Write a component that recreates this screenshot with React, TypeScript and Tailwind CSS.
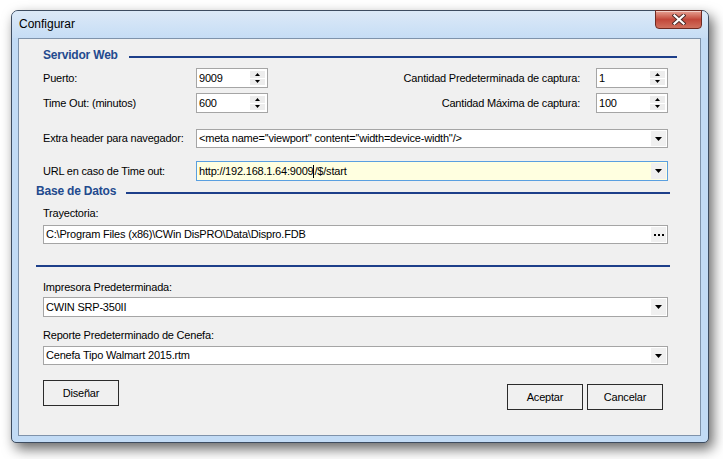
import type { ReactNode } from 'react'

const FONT = { fontFamily: '"Liberation Sans", Arial, sans-serif' }

function Tri({ up = false, w = 7, h = 4 }: { up?: boolean; w?: number; h?: number }) {
  return (
    <svg width={w} height={h} viewBox={`0 0 ${w} ${h}`} className="block">
      <path d={up ? `M${w / 2} 0 L${w} ${h} L0 ${h}Z` : `M0 0 L${w} 0 L${w / 2} ${h}Z`} fill="#000" />
    </svg>
  )
}

function SpinBox({ value }: { value: string }) {
  return (
    <div className="flex h-[20px] w-[72px] border border-[#a5a5a5] bg-white">
      <span className="flex-1 pl-[2px] leading-[18px]">{value}</span>
      <div className="my-[2px] mr-[2px] flex w-[15px] flex-col gap-[1px]">
        <div className="flex flex-1 items-center justify-center bg-[#ededed]">
          <Tri up w={5} h={3} />
        </div>
        <div className="flex flex-1 items-center justify-center bg-[#ededed]">
          <Tri w={5} h={3} />
        </div>
      </div>
    </div>
  )
}

function Combo({
  children,
  focused = false,
  button,
  height = 'h-[20px]',
}: {
  children: ReactNode
  focused?: boolean
  button?: ReactNode
  height?: string
}) {
  return (
    <div
      className={`flex ${height} border ${
        focused ? 'border-[#5a9fe0] bg-[#ffffe0]' : 'border-[#a5a5a5] bg-white'
      }`}
    >
      <span className="flex flex-1 items-center truncate pl-[2px]">{children}</span>
      <div className="m-[1px] flex w-[15px] items-center justify-center bg-[#f0f0f0]">
        {button ?? <Tri />}
      </div>
    </div>
  )
}

function Heading({ title, pl, pr, gap }: { title: string; pl: string; pr: string; gap: string }) {
  return (
    <div className={`flex h-[14px] items-center ${pl} ${pr}`}>
      <span className="text-[12px] font-bold leading-[14px] tracking-[-0.2px] text-[#234a8e]">{title}</span>
      <div className={`${gap} mt-[3px] h-[2px] flex-1 bg-[#1d3f8a]`} />
    </div>
  )
}

function Btn({ label }: { label: string }) {
  return (
    <button
      type="button"
      className="flex h-[26px] w-[76px] items-center justify-center border border-[#2b2b2b] bg-[#f0f0f0] text-[11px]"
    >
      {label}
    </button>
  )
}

export default function App() {
  return (
    <div
      className="min-h-screen bg-white pl-[11px] pt-[10px] text-[11px] tracking-[-0.2px] text-black"
      style={FONT}
    >
      <div className="flex h-[433px] w-[698px] flex-col rounded-t-[7px] rounded-b-[5px] border border-[#3d4c60] bg-[#c2dbf5] shadow-[4px_6px_13px_rgba(0,0,0,0.6)]">
        {/* title bar */}
        <div className="relative flex h-[27px] rounded-t-[6px] bg-gradient-to-b from-[#dce9f7] to-[#c6ddf5] pl-[7px]">
          <span className="mt-[6px] text-[12px] leading-[15px] tracking-normal">Configurar</span>
          <div className="ml-auto mr-[6px] -mt-[1px] flex h-[19px] w-[47px] items-center justify-center rounded-b-[4px] border border-[#6e2a22] bg-gradient-to-b from-[#e6a193] via-[#c2473a] to-[#d0705e] shadow-[inset_0_1px_0_rgba(255,255,255,0.5)]">
            <svg width="14" height="11" viewBox="0 0 14 11">
              <path d="M2.5 1.5 L11.5 9.5 M11.5 1.5 L2.5 9.5" stroke="#4a2a28" strokeWidth="4" strokeLinecap="square" />
              <path d="M2.5 1.5 L11.5 9.5 M11.5 1.5 L2.5 9.5" stroke="#ffffff" strokeWidth="2.2" strokeLinecap="square" />
            </svg>
          </div>
        </div>

        {/* client area */}
        <div className="mb-[6px] ml-[6px] mr-[7px] flex flex-1 flex-col border border-[#7f93ab] bg-[#f0f0f0]">
          <div className="mt-[9px]">
            <Heading title="Servidor Web" pl="pl-[24px]" pr="pr-[23px]" gap="ml-[11px]" />
          </div>

          <div className="mt-[6px] flex h-[20px] items-center pl-[24px] pr-[32px]">
            <span className="w-[153px]">Puerto:</span>
            <SpinBox value="9009" />
            <span className="flex-1 pr-[16px] text-right">Cantidad Predeterminada de captura:</span>
            <SpinBox value="1" />
          </div>
          <div className="mt-[5px] flex h-[20px] items-center pl-[24px] pr-[32px]">
            <span className="w-[153px]">Time Out: (minutos)</span>
            <SpinBox value="600" />
            <span className="flex-1 pr-[16px] text-right">Cantidad Máxima de captura:</span>
            <SpinBox value="100" />
          </div>

          <div className="mt-[16px] flex items-center pl-[24px] pr-[32px]">
            <span className="w-[153px]">Extra header para navegador:</span>
            <div className="flex-1">
              <Combo height="h-[19px]">
                &lt;meta name=''viewport'' content=''width=device-width''/&gt;
              </Combo>
            </div>
          </div>
          <div className="mt-[13px] flex items-center pl-[24px] pr-[32px]">
            <span className="w-[153px]">URL en caso de Time out:</span>
            <div className="flex-1">
              <Combo focused>
                http://192.168.1.64:9009
                <span className="inline-block h-[13px] w-px bg-black" />
                /$/start
              </Combo>
            </div>
          </div>

          <div className="mt-[3px]">
            <Heading title="Base de Datos" pl="pl-[17px]" pr="pr-[30px]" gap="ml-[10px]" />
          </div>

          <div className="mt-[9px] h-[13px] pl-[24px] leading-[13px]">Trayectoria:</div>
          <div className="mt-[5px] pl-[24px] pr-[32px]">
            <Combo
              height="h-[19px]"
              button={
                <span className="flex gap-[2px]">
                  <span className="h-[2px] w-[2px] bg-black" />
                  <span className="h-[2px] w-[2px] bg-black" />
                  <span className="h-[2px] w-[2px] bg-black" />
                </span>
              }
            >
              C:\Program Files (x86)\CWin DisPRO\Data\Dispro.FDB
            </Combo>
          </div>

          <div className="ml-[17px] mr-[30px] mt-[21px] h-[2px] bg-[#1d3f8a]" />

          <div className="mt-[14px] h-[13px] pl-[24px] leading-[13px]">Impresora Predeterminada:</div>
          <div className="mt-[3px] pl-[24px] pr-[32px]">
            <Combo>CWIN SRP-350II</Combo>
          </div>

          <div className="mt-[12px] h-[13px] pl-[24px] leading-[13px]">Reporte Predeterminado de Cenefa:</div>
          <div className="mt-[4px] pl-[24px] pr-[32px]">
            <Combo height="h-[19px]">Cenefa Tipo Walmart 2015.rtm</Combo>
          </div>

          <div className="mt-[15px] flex items-start pl-[24px] pr-[37px]">
            <Btn label="Diseñar" />
            <div className="ml-auto mt-[4px] flex gap-[4px]">
              <Btn label="Aceptar" />
              <Btn label="Cancelar" />
            </div>
          </div>
        </div>
      </div>
    </div>
  )
}
